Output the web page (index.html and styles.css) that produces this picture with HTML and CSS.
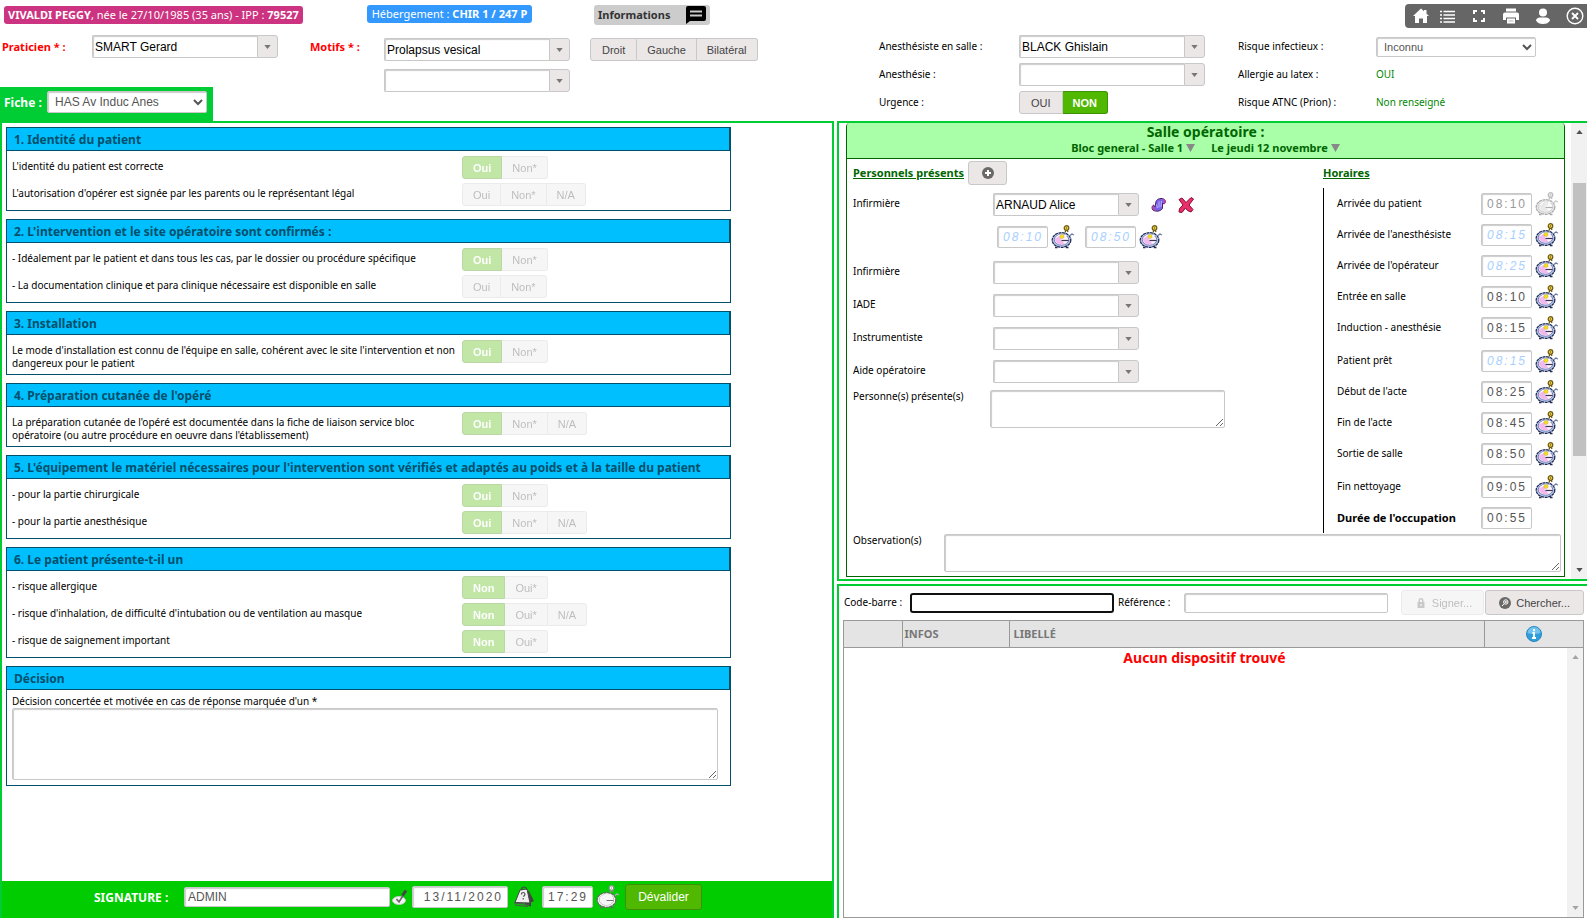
FILE: index.html
```html
<!DOCTYPE html>
<html lang="fr">
<head>
<meta charset="utf-8">
<title>Feuille de bloc - VIVALDI PEGGY</title>
<link rel="stylesheet" href="styles.css">
</head>
<body>
<svg class="sprite" aria-hidden="true">
  <symbol id="arrow" viewBox="0 0 8 5"><path d="M0 0h8L4 5z" fill="currentColor"/></symbol>
  <symbol id="triangle" viewBox="0 0 9 8"><path d="M0 0h9L4.500 8z" fill="currentColor"/></symbol>
  <symbol id="clock" viewBox="0 0 24 24">
    <ellipse cx="10.500" cy="15" rx="9.300" ry="7.300" fill="#bccdf0" stroke="#232c55" stroke-width="1.300" stroke-dasharray="3 .6"/>
    <ellipse cx="10.500" cy="14.800" rx="7.300" ry="5.400" fill="#fdf3fb" stroke="#6274ad" stroke-width=".9"/>
    <path d="M3.800 14.500q1-3 5-3.500l1.500 4 3.500 4.300q-8 1.500-10-4.800z" fill="#f1b9ee"/>
    <path d="M5.500 12.500q2-3 6-2.700l4.500 1.200" fill="none" stroke="#fff" stroke-width="1.200"/>
    <circle cx="11" cy="11.500" r="2" fill="#f6e11c" stroke="#c7a820" stroke-width=".5"/>
    <path d="M10.500 15.500h7" stroke="#3a3358" stroke-width="1.200"/>
    <path d="M14 7.500l1.300-3M17 7l-1-2" stroke="#6d5b14" stroke-width="1.300"/>
    <path d="M19 10.500l2.500-2M20.500 9l2.500 1" stroke="#6c7aa8" stroke-width="1.300"/>
    <circle cx="15.500" cy="3" r="2.300" fill="#f0d24a" stroke="#6d5b14" stroke-width="1.200"/>
    <circle cx="15.500" cy="3" r=".7" fill="#6d5b14"/>
    <path d="M4 22.500h2.500M15 22.500h2.500" stroke="#232c55" stroke-width="1.300"/>
  </symbol>
  <symbol id="swap" viewBox="0 0 16 14">
    <path d="M5 3.500C6 .5 11-.5 13.500 1.500c1.500 1.500 1 3.500-.5 4.500l-1.500-1v5.500c-2 3-7 3.500-9.500 1.500C.5 10.500.8 8 2.500 7L4 9z" fill="#7b62ea" stroke="#4a1d66" stroke-width="1"/>
    <path d="M8 3.500v6M5.500 6.500l1 3.500M10.500 3l-.5 6" stroke="#b9b4ff" stroke-width="1"/>
    <path d="M12 1.500c2.500.5 3 2.500 1 4.500M2.500 8c-1.500 2 0 4 2.500 4" fill="none" stroke="#c04a8c" stroke-width="1.300"/>
  </symbol>
  <symbol id="cross" viewBox="0 0 16 16"><path d="M1 2.500L4 1l4 4.500L13 .5 15.500 2 11 8l4 4.500-2 2.500-3.500-1.500L7.500 11 4 15.500 1 15l.5-3.500L5 8z" fill="#e8306a" stroke="#8c0a32" stroke-width="1"/></symbol>
</svg>

<header class="top">
  <div class="top-left">
    <div class="col-patient">
      <div class="badge patient"><b>VIVALDI PEGGY</b>, née le 27/10/1985 (35 ans) - IPP : <b>79527</b></div>
      <div class="field praticien">
        <label class="required" for="praticien">Praticien * :</label>
        <span class="combo wide"><input id="praticien" value="SMART Gerard"><button aria-label="Ouvrir"><svg><use href="#arrow"/></svg></button></span>
      </div>
      <div class="tab">
        <label for="fiche">Fiche :</label>
        <select id="fiche"><option>HAS Av Induc Anes</option></select>
      </div>
    </div>
    <div class="col-motifs">
      <div class="badges">
        <div class="badge lodging">Hébergement : <b>CHIR 1 / 247 P</b></div>
        <button class="badge infos">Informations <svg viewBox="0 0 20 18"><path d="M2 0h16q2 0 2 2v11q0 2-2 2H4l-4 3V2q0-2 2-2z" fill="#000"/><path d="M4 5.500h12M4 9.500h12" stroke="#ccc" stroke-width="2"/></svg></button>
      </div>
      <div class="motifs">
        <label class="required" for="motif1">Motifs * :</label>
        <div class="stack">
          <span class="combo wide"><input id="motif1" value="Prolapsus vesical"><button aria-label="Ouvrir"><svg><use href="#arrow"/></svg></button></span>
          <span class="combo wide"><input aria-label="Motif 2"><button aria-label="Ouvrir"><svg><use href="#arrow"/></svg></button></span>
        </div>
        <div class="group side"><button>Droit</button><button>Gauche</button><button>Bilatéral</button></div>
      </div>
    </div>
  </div>
  <div class="top-right">
    <nav class="toolbar">
      <button aria-label="Accueil"><svg viewBox="0 0 18 18"><path d="M9 1.500L1 9h2v7h4v-4.500h4V16h4V9h2l-2.500-2.300V3H12v1.300z" fill="#fff"/></svg></button>
      <button aria-label="Liste"><svg viewBox="0 0 18 18"><path d="M2 4.500h2M2 8h2M2 11.500h2M2 15h2M5.500 4.500H17M5.500 8H17M5.500 11.500H17M5.500 15H17" stroke="#fff" stroke-width="1.300"/></svg></button>
      <button aria-label="Plein écran"><svg viewBox="0 0 18 18"><path d="M4 7V4h3M11 4h3v3M14 11v3h-3M7 14H4v-3" fill="none" stroke="#fff" stroke-width="2"/></svg></button>
      <button aria-label="Imprimer"><svg viewBox="0 0 18 18"><path d="M4 1.500h10v3H4zM3 5.500h12q2 0 2 2V13h-3v-2.500H4V13H1V7.500q0-2 2-2zM5 11.500h8v5H5z" fill="#fff"/><path d="M6.500 14h5" stroke="#bbb"/></svg></button>
      <button aria-label="Utilisateur"><svg viewBox="0 0 18 18"><circle cx="9" cy="5.500" r="4" fill="#fff"/><path d="M5.500 10.500h7q3.500 1 3.500 3-2 3.500-7 3.500t-7-3.500q0-2 3.500-3z" fill="#fff"/></svg></button>
      <button aria-label="Fermer"><svg viewBox="0 0 18 18"><circle cx="9" cy="9" r="7.800" fill="none" stroke="#fff" stroke-width="1.400"/><path d="M6 6l6 6M12 6l-6 6" stroke="#fff" stroke-width="1.800"/></svg></button>
    </nav>
    <div class="info-grid">
      <label for="anesthesiste">Anesthésiste en salle :</label>
      <span class="combo wide"><input id="anesthesiste" value="BLACK Ghislain"><button aria-label="Ouvrir"><svg><use href="#arrow"/></svg></button></span>
      <label for="risque">Risque infectieux :</label>
      <select id="risque" class="small"><option>Inconnu</option></select>
      <label for="anesthesie">Anesthésie :</label>
      <span class="combo wide"><input id="anesthesie"><button aria-label="Ouvrir"><svg><use href="#arrow"/></svg></button></span>
      <span>Allergie au latex :</span><span class="ok">OUI</span>
      <span>Urgence :</span>
      <div class="group urgence"><button>OUI</button><button class="on">NON</button></div>
      <span>Risque ATNC (Prion) :</span><span class="ok">Non renseigné</span>
    </div>
  </div>
</header>

<main class="main">
  <section class="checklist">
    <div class="cards">
      <article class="card">
        <h2>1. Identité du patient</h2>
        <div class="rows">
          <p>L'identité du patient est correcte</p><div class="group"><button class="on" disabled>Oui</button><button disabled>Non*</button></div>
          <p>L'autorisation d'opérer est signée par les parents ou le représentant légal</p><div class="group"><button disabled>Oui</button><button disabled>Non*</button><button disabled>N/A</button></div>
        </div>
      </article>
      <article class="card">
        <h2>2. L'intervention et le site opératoire sont confirmés :</h2>
        <div class="rows">
          <p>- Idéalement par le patient et dans tous les cas, par le dossier ou procédure spécifique</p><div class="group"><button class="on" disabled>Oui</button><button disabled>Non*</button></div>
          <p>- La documentation clinique et para clinique nécessaire est disponible en salle</p><div class="group"><button disabled>Oui</button><button disabled>Non*</button></div>
        </div>
      </article>
      <article class="card">
        <h2>3. Installation</h2>
        <div class="rows">
          <p>Le mode d'installation est connu de l'équipe en salle, cohérent avec le site l'intervention et non<br>dangereux pour le patient</p><div class="group"><button class="on" disabled>Oui</button><button disabled>Non*</button></div>
        </div>
      </article>
      <article class="card">
        <h2>4. Préparation cutanée de l'opéré</h2>
        <div class="rows">
          <p>La préparation cutanée de l'opéré est documentée dans la fiche de liaison service bloc<br>opératoire (ou autre procédure en oeuvre dans l'établissement)</p><div class="group"><button class="on" disabled>Oui</button><button disabled>Non*</button><button disabled>N/A</button></div>
        </div>
      </article>
      <article class="card">
        <h2>5. L'équipement le matériel nécessaires pour l'intervention sont vérifiés et adaptés au poids et à la taille du patient</h2>
        <div class="rows">
          <p>- pour la partie chirurgicale</p><div class="group"><button class="on" disabled>Oui</button><button disabled>Non*</button></div>
          <p>- pour la partie anesthésique</p><div class="group"><button class="on" disabled>Oui</button><button disabled>Non*</button><button disabled>N/A</button></div>
        </div>
      </article>
      <article class="card">
        <h2>6. Le patient présente-t-il un</h2>
        <div class="rows">
          <p>- risque allergique</p><div class="group"><button class="on" disabled>Non</button><button disabled>Oui*</button></div>
          <p>- risque d'inhalation, de difficulté d'intubation ou de ventilation au masque</p><div class="group"><button class="on" disabled>Non</button><button disabled>Oui*</button><button disabled>N/A</button></div>
          <p>- risque de saignement important</p><div class="group"><button class="on" disabled>Non</button><button disabled>Oui*</button></div>
        </div>
      </article>
      <article class="card">
        <h2>Décision</h2>
        <div class="decision">
          <label for="decision">Décision concertée et motivée en cas de réponse marquée d'un *</label>
          <textarea id="decision"></textarea>
        </div>
      </article>
    </div>
    <div class="signature">
      <label for="signataire">SIGNATURE :</label>
      <input id="signataire" class="signer" value="ADMIN">
      <svg class="ico-pen" viewBox="0 0 16 16"><ellipse cx="7" cy="11.500" rx="6.500" ry="4" fill="#f4f4f4" stroke="#c4c4c4"/><path d="M4.500 10l2.500 3 5-8" fill="none" stroke="#666" stroke-width="1.600"/><path d="M10.500 6.500L14 1.500" stroke="#444" stroke-width="3"/></svg>
      <input class="time date" aria-label="Date" value="13/11/2020">
      <svg class="ico-date" viewBox="0 0 22 22"><path d="M12 4l4 1 5 10-3 1.500v4L12 19z" fill="#444"/><path d="M7 4l7-1 3 14-15-.5z" fill="#eee" stroke="#444"/><path d="M8.500 8.500q0-2 1.700-2t1.700 2q0 1.300-1.700 2M10.200 12v1.500" fill="none" stroke="#555" stroke-width="1.200"/><path d="M1 17l15 1.500M2 19l13 1.500" stroke="#555"/><path d="M8 4q1-3 3-3t3 2.500" fill="none" stroke="#444" stroke-width="1.200"/></svg>
      <input class="time" aria-label="Heure" value="17:29">
      <svg class="ico-clock pale"><use href="#clock"/></svg>
      <button class="validate">Dévalider</button>
    </div>
  </section>

  <div class="right">
    <section class="room-panel">
      <div class="room">
        <header class="room-head">
          <h1>Salle opératoire :</h1>
          <div class="room-pick"><a href="#salle">Bloc general - Salle 1<svg><use href="#triangle"/></svg></a><a href="#date">Le jeudi 12 novembre<svg><use href="#triangle"/></svg></a></div>
        </header>
        <div class="room-cols">
          <div class="staff">
            <div class="staff-title"><h3>Personnels présents</h3><button class="add" aria-label="Ajouter"><svg viewBox="0 0 12 12"><circle cx="6" cy="6" r="6" fill="#6b6868"/><path d="M6 3v6M3 6h6" stroke="#fff" stroke-width="2"/></svg></button></div>
            <div class="staff-row"><label for="s1">Infirmière</label><span class="combo"><input id="s1" value="ARNAUD Alice"><button aria-label="Ouvrir"><svg><use href="#arrow"/></svg></button></span><svg class="ico-swap"><use href="#swap"/></svg><svg class="ico-cross"><use href="#cross"/></svg></div>
            <div class="staff-times"><input class="time hint" aria-label="Début" value="08:10"><svg class="ico-clock"><use href="#clock"/></svg><input class="time hint second" aria-label="Fin" value="08:50"><svg class="ico-clock"><use href="#clock"/></svg></div>
            <div class="staff-row"><label for="s2">Infirmière</label><span class="combo"><input id="s2"><button aria-label="Ouvrir"><svg><use href="#arrow"/></svg></button></span></div>
            <div class="staff-row"><label for="s3">IADE</label><span class="combo"><input id="s3"><button aria-label="Ouvrir"><svg><use href="#arrow"/></svg></button></span></div>
            <div class="staff-row"><label for="s4">Instrumentiste</label><span class="combo"><input id="s4"><button aria-label="Ouvrir"><svg><use href="#arrow"/></svg></button></span></div>
            <div class="staff-row"><label for="s5">Aide opératoire</label><span class="combo"><input id="s5"><button aria-label="Ouvrir"><svg><use href="#arrow"/></svg></button></span></div>
            <div class="area-row"><label for="present">Personne(s) présente(s)</label><textarea id="present"></textarea></div>
          </div>
          <div class="schedule">
            <h3>Horaires</h3>
            <div class="hours">
              <div class="hour"><label for="h1">Arrivée du patient</label><input id="h1" class="time dim" value="08:10"><svg class="ico-clock off"><use href="#clock"/></svg></div>
              <div class="hour"><label for="h2">Arrivée de l'anesthésiste</label><input id="h2" class="time hint" value="08:15"><svg class="ico-clock"><use href="#clock"/></svg></div>
              <div class="hour"><label for="h3">Arrivée de l'opérateur</label><input id="h3" class="time hint" value="08:25"><svg class="ico-clock"><use href="#clock"/></svg></div>
              <div class="hour"><label for="h4">Entrée en salle</label><input id="h4" class="time" value="08:10"><svg class="ico-clock"><use href="#clock"/></svg></div>
              <div class="hour"><label for="h5">Induction - anesthésie</label><input id="h5" class="time" value="08:15"><svg class="ico-clock"><use href="#clock"/></svg></div>
              <div class="hour spaced"><label for="h6">Patient prêt</label><input id="h6" class="time hint" value="08:15"><svg class="ico-clock"><use href="#clock"/></svg></div>
              <div class="hour"><label for="h7">Début de l'acte</label><input id="h7" class="time" value="08:25"><svg class="ico-clock"><use href="#clock"/></svg></div>
              <div class="hour"><label for="h8">Fin de l'acte</label><input id="h8" class="time" value="08:45"><svg class="ico-clock"><use href="#clock"/></svg></div>
              <div class="hour"><label for="h9">Sortie de salle</label><input id="h9" class="time" value="08:50"><svg class="ico-clock"><use href="#clock"/></svg></div>
              <div class="hour spaced"><label for="h10">Fin nettoyage</label><input id="h10" class="time" value="09:05"><svg class="ico-clock"><use href="#clock"/></svg></div>
              <div class="hour total"><label for="h11">Durée de l'occupation</label><input id="h11" class="time" value="00:55"></div>
            </div>
          </div>
        </div>
        <div class="obs"><label for="obs">Observation(s)</label><textarea id="obs"></textarea></div>
      </div>
      <div class="scrollbar room-scroll"><svg class="up"><use href="#arrow"/></svg><i></i><svg><use href="#arrow"/></svg></div>
    </section>

    <section class="devices">
      <form class="search">
        <label for="barcode">Code-barre :</label><input id="barcode" class="active">
        <label for="ref">Référence :</label><input id="ref">
        <div class="actions">
          <button type="button" class="action" disabled><svg viewBox="0 0 12 12"><path d="M3.500 5V3.500a2.500 2.500 0 0 1 5 0V5h1v6h-7V5zm1.500 0h2V3.500a1 1 0 0 0-2 0z" fill="#6b6868"/><path d="M6 7v2" stroke="#fff"/></svg>Signer...</button>
          <button type="button" class="action"><svg viewBox="0 0 12 12"><circle cx="6" cy="6" r="6" fill="#6b6868"/><circle cx="6.800" cy="5" r="2.200" fill="none" stroke="#fff"/><path d="M5 6.800L3 9M5.800 5h2M6.800 4v2" stroke="#fff"/></svg>Chercher...</button>
        </div>
      </form>
      <div class="list">
        <table>
          <colgroup><col class="c1"><col class="c2"><col><col class="c4"></colgroup>
          <thead><tr><th></th><th>INFOS</th><th class="lib">LIBELLÉ</th><th class="center"><svg viewBox="0 0 16 16"><circle cx="8" cy="8" r="7.500" fill="#2f9fdc" stroke="#2b86bb"/><path d="M1.500 7a6.500 6 0 0 1 13 0q-6.500 2-13 0z" fill="#72c3ee"/><path d="M8 3v2.200M6.500 7H8v5M6 12h4" fill="none" stroke="#fff" stroke-width="1.800"/></svg></th></tr></thead>
          <tbody><tr><td colspan="4">Aucun dispositif trouvé</td></tr></tbody>
        </table>
        <div class="scrollbar idle"><svg class="up"><use href="#arrow"/></svg><svg><use href="#arrow"/></svg></div>
      </div>
    </section>
  </div>
</main>
</body>
</html>
```
FILE: styles.css
```css
* { box-sizing: border-box; }
html, body { height: 100%; }
body {
  margin: 0;
  display: flex;
  flex-direction: column;
  background: #fff;
  color: #000;
  font: 10px/13px "Noto Sans", "Open Sans", sans-serif;
}
h1, h2, h3, p { margin: 0; }
button, input, select, textarea { font-family: "Liberation Sans", Arial, sans-serif; margin: 0; }
.sprite { display: none; }
svg { flex: none; }

/* Controls */
input, textarea, select {
  border: 1px solid #c8c8c8;
  border-radius: 2px;
  background: #fff;
  color: #555;
  font-size: 12px;
  padding: 0 3px;
  min-width: 0;
  box-shadow: inset 1px 1px 1px #ccc;
}
textarea { display: block; resize: both; }
select { height: 22px; }
select.small { height: 20px; font-size: 11px; }
.combo { display: flex; width: 146px; height: 23px; }
.combo.wide { width: 186px; }
.combo input { flex: 1; color: #000; padding: 0 2px; border-radius: 2px 0 0 2px; border-right: 0; }
.combo button {
  width: 21px;
  padding: 0;
  display: grid;
  place-items: center;
  border: 1px solid #c8c8c8;
  border-radius: 0 3px 3px 0;
  background: #ebe7e7;
  color: #777;
}
.combo svg { width: 7px; height: 4px; }
.group { display: flex; height: 23px; }
.group button {
  border: 1px solid #c8c8c8;
  border-left-width: 0;
  background: #ebe7e7;
  color: #444;
  font-size: 11px;
  padding: 0 10px;
}
.group button:first-child { border-left-width: 1px; padding: 0 11px; border-radius: 3px 0 0 3px; }
.group button:last-child { border-radius: 0 3px 3px 0; }
.group button.on { background: #50b800; border-color: #3c9204; color: #fff; font-weight: bold; }
.group button:disabled { opacity: .35; }
.rows .group button:first-child { padding: 0 10px; }
.time {
  width: 51px;
  height: 22px;
  padding: 0 4px;
  text-align: right;
  letter-spacing: 2px;
  color: #555;
}
.time.hint { color: #a8d0ff; font-style: italic; }
.time.dim { color: #999; }
.ico-clock { width: 24px; height: 24px; }
.ico-clock.off { filter: grayscale(1); opacity: .4; }
.ico-clock.pale { filter: grayscale(1) brightness(1.3) contrast(.6) brightness(1.2); }

/* Page header */
.top, .main { display: grid; grid-template-columns: 834fr 750fr; column-gap: 3px; }
.top { min-height: 121px; }
.top-left { display: flex; }
.col-patient { width: 310px; display: flex; flex-direction: column; align-items: flex-start; padding-top: 6px; }
.badge {
  height: 18px;
  line-height: 18px;
  padding: 0 4px;
  border: 0;
  border-radius: 3px;
  color: #fff;
  font-size: 11px;
  white-space: nowrap;
}
.patient { margin-left: 4px; background: #cc3380; }
.lodging { background: #3399ff; width: 165px; text-align: center; }
.infos {
  display: flex;
  align-items: center;
  gap: 16px;
  height: 20px;
  background: #ccc;
  color: #333;
  font: bold 11px/18px "Noto Sans", sans-serif;
}
.infos svg { width: 20px; height: 18px; }
.required { color: #f00; font-weight: bold; font-size: 11px; }
.field { display: flex; align-items: center; padding-left: 2px; }
.praticien { margin-top: 11px; }
.praticien label { width: 90px; }
.tab {
  display: flex;
  align-items: center;
  gap: 4px;
  width: 213px;
  height: 34px;
  margin-top: auto;
  padding: 0 4px 4px;
  background: #00cc33;
  color: #fff;
  font-size: 12px;
  font-weight: bold;
}
.tab label { width: 39px; white-space: nowrap; }
.tab select { width: 160px; }
.col-motifs { flex: 1; padding-top: 5px; }
.badges { display: flex; gap: 62px; padding-left: 57px; }
.motifs { display: flex; margin-top: 13px; }
.motifs label { width: 74px; line-height: 18px; }
.stack { display: grid; gap: 8px; }
.side { margin-left: 20px; }
.top-right { padding-top: 4px; }
.toolbar {
  display: flex;
  align-items: center;
  justify-content: flex-end;
  width: 182px;
  height: 24px;
  margin-left: auto;
  padding-right: 3px;
  border-radius: 4px 0 0 4px;
  background: #666;
}
.toolbar button { padding: 0; border: 0; background: none; width: 18px; height: 18px; }
.toolbar button + button { margin-left: 14px; }
.toolbar button:nth-child(2) { margin-left: 8px; }
.toolbar svg { display: block; width: 18px; height: 18px; }
.info-grid {
  display: grid;
  grid-template-columns: 140px 219px 138px 160px;
  grid-auto-rows: 23px;
  row-gap: 5px;
  align-items: center;
  margin-top: 7px;
  padding-left: 42px;
}
.ok { color: #080; }

/* Checklist */
.main { flex: 1; min-height: 0; }
.checklist { display: flex; flex-direction: column; border: 2px solid #00cc33; border-bottom: 0; min-width: 0; }
.cards { flex: 1; display: flex; flex-direction: column; gap: 8px; padding: 4px 101px 0 4px; }
.card { border: 1px solid #004f6b; border-top: 0; }
.card h2 {
  height: 24px;
  padding-left: 7px;
  border: solid #004f6b;
  border-width: 1px 1px 1px 0;
  background: #00bfff;
  color: #004f6b;
  font-size: 12px;
  line-height: 23px;
  white-space: nowrap;
}
.rows { display: grid; grid-template-columns: 450px 1fr; row-gap: 4px; padding: 5px 5px 4px; }
.rows p { padding-top: 4px; white-space: nowrap; }
.decision { padding: 5px 12px 5px 5px; }
.decision label { display: block; }
.decision textarea { width: 100%; height: 72px; }
.signature {
  display: flex;
  align-items: center;
  height: 37px;
  padding: 0 0 5px 92px;
  background: #00cc00;
}
.signature label { width: 90px; color: #fff; font-size: 12px; font-weight: bold; }
.signer { width: 206px; height: 20px; }
.ico-pen { width: 16px; height: 16px; margin: 0 4px 0 2px; }
.time.date { width: 96px; }
.ico-date { width: 22px; height: 22px; margin: 0 7px 0 5px; }
.signature .ico-clock { margin: 0 5px 0 3px; }
.validate {
  width: 77px;
  height: 26px;
  padding: 0;
  border: 1px solid #3c9204;
  border-radius: 3px;
  background: #50b800;
  color: #fff;
  font-size: 12px;
}

/* Operating room */
.right { display: flex; flex-direction: column; gap: 3px; min-width: 0; }
.room-panel {
  display: flex;
  justify-content: space-between;
  padding-left: 7px;
  border: 2px solid #00cc33;
  border-right: 0;
}
.room {
  flex: 1;
  margin: 0 6px 2px 0;
  border: 1px solid #006600;
  border-top: 0;
  border-radius: 4px 4px 0 0;
}
.room-head {
  height: 36px;
  border-bottom: 1px solid #006600;
  border-radius: 4px 4px 0 0;
  background: #a8ffa8;
  color: #006600;
  text-align: center;
}
.room-head h1 { font-size: 14px; line-height: 18px; }
.room-pick { display: flex; justify-content: center; gap: 16px; font-size: 11px; line-height: 14px; font-weight: bold; }
.room-pick a { color: inherit; text-decoration: none; }
.room-pick svg { width: 9px; height: 8px; margin-left: 3px; color: #888; }
.room-cols { display: grid; grid-template-columns: 1fr 241px; }
.staff { padding: 2px 0 0 6px; }
h3 { color: #006600; font-size: 11px; line-height: 14px; text-decoration: underline; }
.staff-title { display: flex; align-items: center; gap: 4px; height: 27px; padding-bottom: 3px; }
.add { width: 39px; height: 24px; padding: 0; border: 1px solid #c8c8c8; border-radius: 3px; background: #ebe7e7; display: grid; place-items: center; }
.add svg { width: 12px; height: 12px; }
.staff-row { display: flex; align-items: center; height: 33px; }
.staff-row label { width: 140px; padding-bottom: 3px; }
.ico-swap { width: 16px; height: 14px; margin: 0 11px 0 12px; }
.ico-cross { width: 16px; height: 16px; }
.staff-times { display: flex; align-items: center; height: 35px; padding: 0 0 3px 144px; }
.staff-times .ico-clock { margin-left: 3px; }
.second { margin-left: 10px; }
.area-row { display: flex; padding-top: 2px; }
.area-row label { width: 137px; }
.area-row textarea { width: 235px; height: 38px; }
.schedule h3 { padding: 7px 0 0; height: 29px; }
.hours { border-left: 1px solid #000; padding-left: 13px; }
.hour { display: flex; align-items: center; height: 31px; }
.hour.spaced { margin-top: 2px; }
.hour label { width: 144px; }
.hour .ico-clock { margin-left: 3px; }
.total label { font-size: 11px; font-weight: bold; }
.obs { display: flex; padding: 1px 3px 4px 6px; }
.obs label { width: 91px; }
.obs textarea { flex: 1; height: 38px; }
.scrollbar {
  display: flex;
  flex-direction: column;
  align-items: center;
  justify-content: space-between;
  width: 16px;
  padding: 7px 0;
  background: #f1f1f1;
  color: #505050;
}
.scrollbar svg { width: 7px; height: 4px; }
.scrollbar .up { transform: rotate(180deg); }
.room-scroll i { width: 13px; height: 273px; margin-bottom: 63px; background: #c1c1c1; }

/* Devices */
.devices {
  flex: 1;
  display: flex;
  flex-direction: column;
  gap: 5px;
  padding: 4px 3px 0 4px;
  border: solid #00cc33;
  border-width: 2px 0 0 2px;
}
.search { display: flex; align-items: center; height: 25px; padding-left: 1px; }
.search label { width: 66px; }
.search input { width: 204px; height: 20px; }
.search input + label { margin-left: 4px; }
.search .active { border: 2px solid #101010; border-radius: 3px; box-shadow: none; }
.actions { display: flex; gap: 1px; margin-left: auto; }
.action {
  display: flex;
  align-items: center;
  gap: 5px;
  height: 25px;
  padding: 0 13px;
  border: 1px solid #c8c8c8;
  border-radius: 3px;
  background: #ebe7e7;
  color: #444;
  font-size: 11px;
}
.action:disabled { opacity: .35; padding: 0 11px 0 13px; }
.action svg { width: 12px; height: 12px; }
.list { flex: 1; position: relative; border: 1px solid #999; }
.list table { width: 100%; table-layout: fixed; border-collapse: collapse; }
.c1 { width: 58px; }
.c2 { width: 107px; }
.c4 { width: 99px; }
th {
  height: 26px;
  padding: 0 2px;
  border: solid #999;
  border-width: 0 1px 1px 0;
  background: #e4e4e4;
  color: #777;
  font-size: 11px;
  text-align: left;
}
th:last-child { border-right: 0; }
th.lib { padding-left: 4px; }
th.center { text-align: center; }
th svg { width: 16px; height: 16px; display: block; margin: auto; }
td { padding: 0 18px 0 0; color: #f00; font-size: 14px; font-weight: bold; line-height: 19px; text-align: center; }
.idle { position: absolute; right: 0; top: 27px; bottom: 0; color: #a3a3a3; }
```
